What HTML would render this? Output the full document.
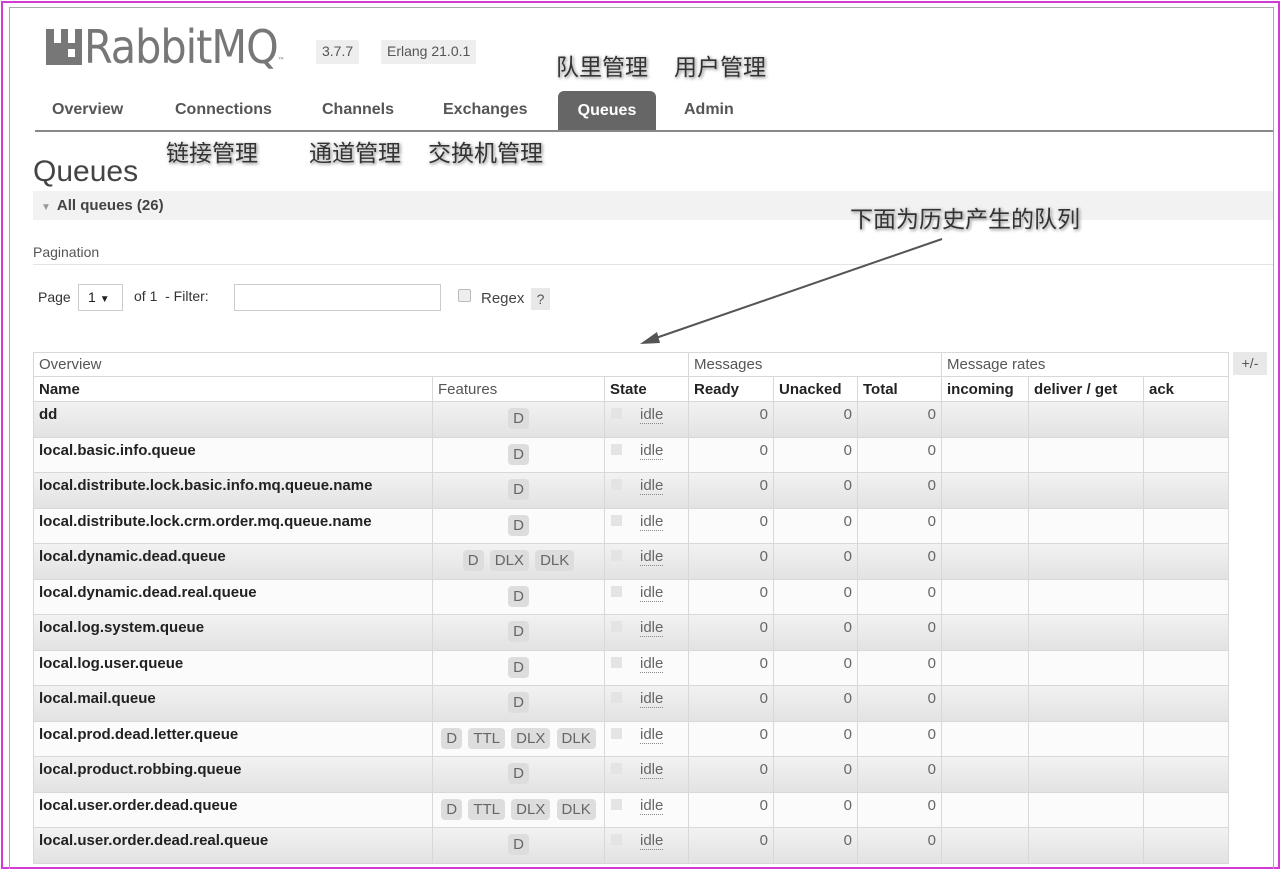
<!DOCTYPE html>
<html><head><meta charset="utf-8"><style>
*{margin:0;padding:0;box-sizing:border-box}
body{width:1282px;height:871px;background:#fff;position:relative;overflow:hidden;font-family:"Liberation Sans","Noto Sans CJK SC",sans-serif;color:#222}
.mag{position:absolute;left:1px;top:1px;width:1279px;height:868px;border:2px solid #d23cd2}
.frame{position:absolute;left:9px;top:7px;width:1265px;height:862px;border:1px solid #aaa;border-bottom:none}
.abs{position:absolute}
.logo{left:46px;top:20px;font-size:46px;color:#777;letter-spacing:-1px;font-family:"DejaVu Sans Condensed","Liberation Sans",sans-serif;font-weight:300}
.ver{top:40px;height:24px;background:#eee;color:#555;font-size:14px;padding:3px 6px;border-radius:2px}
.cn{font-family:"Noto Sans CJK SC",sans-serif;font-size:23px;color:#333;text-shadow:0 0 3px #fff,1px 1px 3px #555;}
.nav{top:101px;font-size:16px;font-weight:bold;color:#555}
.tab{left:558px;top:91px;width:98px;height:40px;background:#666;border-radius:6px 6px 0 0;color:#fff;font-weight:bold;font-size:16px;text-align:center;line-height:40px}
.navline{left:35px;top:130px;width:1238px;height:2px;background:#888}
table{position:absolute;left:33px;top:352px;border-collapse:collapse;font-size:15px;table-layout:fixed}
td,th{border:1px solid #d8d8d8;padding:0 5px;overflow:hidden;white-space:nowrap}
th{text-align:left;font-weight:normal;color:#555;height:24px}
tr.h2 th{font-weight:bold;color:#222;height:25px}
tr.r td{height:35.5px;vertical-align:top;padding-top:4px}
tr.r td.n{font-weight:bold;font-size:15px}
tr.g{background:linear-gradient(#f2f2f2,#e2e2e2)}
tr.w{background:#fbfbfb}
.num{text-align:right;color:#666}
.f{text-align:center;padding-top:6px!important}
.b{display:inline-block;background:#ddd;border-radius:4px;color:#666;padding:2px 5px;margin:0 1px;font-size:15px}
.st{color:#666;padding-left:6px!important}
.sq{display:inline-block;width:11px;height:11px;background:#e4e4e4;margin-right:18px;vertical-align:top;margin-top:2px}
.idle{border-bottom:1px dotted #888}
</style></head><body>
<div class="mag"></div><div class="frame"></div>
<div class="abs logo"><span style="display:inline-block;width:36px;height:36px;background:#777;vertical-align:-2px;margin-right:2px;position:relative"><span style="position:absolute;left:8px;top:0;width:7px;height:14px;background:#fff"></span><span style="position:absolute;left:22px;top:0;width:7px;height:14px;background:#fff"></span><span style="position:absolute;left:22px;top:20px;width:7px;height:8px;background:#fff"></span></span>RabbitMQ<span style="font-size:8px">™</span></div>
<div class="abs ver" style="left:316px">3.7.7</div>
<div class="abs ver" style="left:381px">Erlang 21.0.1</div>
<div class="abs cn" style="left:556px;top:48px">队里管理</div>
<div class="abs cn" style="left:674px;top:48px">用户管理</div>
<div class="abs nav" style="left:52px">Overview</div>
<div class="abs nav" style="left:175px">Connections</div>
<div class="abs nav" style="left:322px">Channels</div>
<div class="abs nav" style="left:443px">Exchanges</div>
<div class="abs tab">Queues</div>
<div class="abs nav" style="left:684px">Admin</div>
<div class="abs navline"></div>
<div class="abs cn" style="left:166px;top:134px">链接管理</div>
<div class="abs cn" style="left:309px;top:134px">通道管理</div>
<div class="abs cn" style="left:428px;top:134px">交换机管理</div>
<div class="abs" style="left:33px;top:155px;font-size:30px;color:#444">Queues</div>
<div class="abs" style="left:33px;top:191px;width:1240px;height:29px;background:#f2f2f2"></div>
<div class="abs" style="left:41px;top:197px;font-size:15px;font-weight:bold;color:#444"><span style="font-size:10px;color:#999;margin-right:6px">▼</span>All queues (26)</div>
<div class="abs cn" style="left:850px;top:200px">下面为历史产生的队列</div>
<div class="abs" style="left:33px;top:244px;font-size:14px;color:#555">Pagination</div>
<div class="abs" style="left:33px;top:264px;width:1240px;height:1px;background:#e4e4e4"></div>
<div class="abs" style="left:38px;top:289px;font-size:14px;color:#333">Page</div>
<div class="abs" style="left:78px;top:284px;width:45px;height:27px;border:1px solid #ccc;font-size:14px;padding:4px 0 0 9px">1 <span style="font-size:10px">▼</span></div>
<div class="abs" style="left:134px;top:288px;font-size:14px;color:#333">of 1 &nbsp;- Filter:</div>
<div class="abs" style="left:234px;top:284px;width:207px;height:27px;border:1px solid #ccc"></div>
<div class="abs" style="left:458px;top:289px;width:13px;height:13px;border:1px solid #bbb;background:#eee;border-radius:2px"></div>
<div class="abs" style="left:481px;top:290px;font-size:15px;color:#444">Regex</div>
<div class="abs" style="left:531px;top:288px;width:19px;height:22px;background:#e8e8e8;color:#555;font-size:14px;text-align:center;line-height:22px">?</div>
<svg class="abs" style="left:630px;top:235px" width="320" height="115"><line x1="312" y1="4" x2="20" y2="105" stroke="#555" stroke-width="2"/><polygon points="10,109 27,97 30,108" fill="#555"/></svg>
<div class="abs" style="left:1233px;top:352px;width:34px;height:23px;background:#e8e8e8;color:#555;font-size:14px;text-align:center;line-height:23px">+/-</div>
<table>
<colgroup><col style="width:399px"><col style="width:172px"><col style="width:84px"><col style="width:85px"><col style="width:84px"><col style="width:84px"><col style="width:87px"><col style="width:115px"><col style="width:85px"></colgroup>
<tr><th colspan="3">Overview</th><th colspan="3">Messages</th><th colspan="3">Message rates</th></tr>
<tr class="h2"><th>Name</th><th style="font-weight:normal;color:#555">Features</th><th>State</th><th>Ready</th><th>Unacked</th><th>Total</th><th>incoming</th><th>deliver / get</th><th>ack</th></tr>
<tr class="r g"><td class="n">dd</td><td class="f"><span class="b">D</span></td><td class="st"><span class="sq"></span><span class="idle">idle</span></td><td class="num">0</td><td class="num">0</td><td class="num">0</td><td></td><td></td><td></td></tr>
<tr class="r w"><td class="n">local.basic.info.queue</td><td class="f"><span class="b">D</span></td><td class="st"><span class="sq"></span><span class="idle">idle</span></td><td class="num">0</td><td class="num">0</td><td class="num">0</td><td></td><td></td><td></td></tr>
<tr class="r g"><td class="n">local.distribute.lock.basic.info.mq.queue.name</td><td class="f"><span class="b">D</span></td><td class="st"><span class="sq"></span><span class="idle">idle</span></td><td class="num">0</td><td class="num">0</td><td class="num">0</td><td></td><td></td><td></td></tr>
<tr class="r w"><td class="n">local.distribute.lock.crm.order.mq.queue.name</td><td class="f"><span class="b">D</span></td><td class="st"><span class="sq"></span><span class="idle">idle</span></td><td class="num">0</td><td class="num">0</td><td class="num">0</td><td></td><td></td><td></td></tr>
<tr class="r g"><td class="n">local.dynamic.dead.queue</td><td class="f"><span class="b">D</span> <span class="b">DLX</span> <span class="b">DLK</span></td><td class="st"><span class="sq"></span><span class="idle">idle</span></td><td class="num">0</td><td class="num">0</td><td class="num">0</td><td></td><td></td><td></td></tr>
<tr class="r w"><td class="n">local.dynamic.dead.real.queue</td><td class="f"><span class="b">D</span></td><td class="st"><span class="sq"></span><span class="idle">idle</span></td><td class="num">0</td><td class="num">0</td><td class="num">0</td><td></td><td></td><td></td></tr>
<tr class="r g"><td class="n">local.log.system.queue</td><td class="f"><span class="b">D</span></td><td class="st"><span class="sq"></span><span class="idle">idle</span></td><td class="num">0</td><td class="num">0</td><td class="num">0</td><td></td><td></td><td></td></tr>
<tr class="r w"><td class="n">local.log.user.queue</td><td class="f"><span class="b">D</span></td><td class="st"><span class="sq"></span><span class="idle">idle</span></td><td class="num">0</td><td class="num">0</td><td class="num">0</td><td></td><td></td><td></td></tr>
<tr class="r g"><td class="n">local.mail.queue</td><td class="f"><span class="b">D</span></td><td class="st"><span class="sq"></span><span class="idle">idle</span></td><td class="num">0</td><td class="num">0</td><td class="num">0</td><td></td><td></td><td></td></tr>
<tr class="r w"><td class="n">local.prod.dead.letter.queue</td><td class="f"><span class="b">D</span> <span class="b">TTL</span> <span class="b">DLX</span> <span class="b">DLK</span></td><td class="st"><span class="sq"></span><span class="idle">idle</span></td><td class="num">0</td><td class="num">0</td><td class="num">0</td><td></td><td></td><td></td></tr>
<tr class="r g"><td class="n">local.product.robbing.queue</td><td class="f"><span class="b">D</span></td><td class="st"><span class="sq"></span><span class="idle">idle</span></td><td class="num">0</td><td class="num">0</td><td class="num">0</td><td></td><td></td><td></td></tr>
<tr class="r w"><td class="n">local.user.order.dead.queue</td><td class="f"><span class="b">D</span> <span class="b">TTL</span> <span class="b">DLX</span> <span class="b">DLK</span></td><td class="st"><span class="sq"></span><span class="idle">idle</span></td><td class="num">0</td><td class="num">0</td><td class="num">0</td><td></td><td></td><td></td></tr>
<tr class="r g"><td class="n">local.user.order.dead.real.queue</td><td class="f"><span class="b">D</span></td><td class="st"><span class="sq"></span><span class="idle">idle</span></td><td class="num">0</td><td class="num">0</td><td class="num">0</td><td></td><td></td><td></td></tr>
</table>
</body></html>
